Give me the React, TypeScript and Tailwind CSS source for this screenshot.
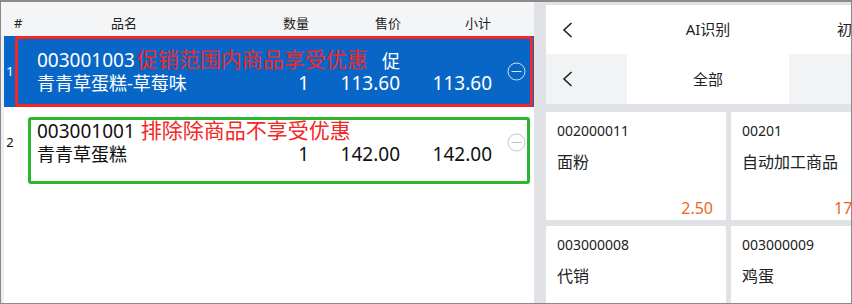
import React from "react";

const Chevron = () => (
  <svg width="11" height="16" viewBox="0 0 11 16" fill="none">
    <polyline points="9.5,1 2,8 9.5,15" stroke="#222" strokeWidth="1.6" />
  </svg>
);

const MinusCircle = ({ color }: { color: string }) => (
  <svg width="19" height="19" viewBox="0 0 19 19" fill="none">
    <circle cx="9.5" cy="9.5" r="8.5" stroke={color} strokeWidth="1" />
    <line x1="4.5" y1="9.5" x2="14.5" y2="9.5" stroke={color} strokeWidth="1" />
  </svg>
);

interface RowProps {
  index: number;
  code: string;
  note: string;
  name: string;
  qty: string;
  price: string;
  subtotal: string;
  promo?: boolean;
  selected?: boolean;
}

const CartRow = ({ index, code, note, name, qty, price, subtotal, promo, selected }: RowProps) => {
  const text = selected ? "text-white" : "text-[#111]";
  return (
    <div className={`flex h-[71px] ${selected ? "bg-[#0867c6]" : "bg-white"} ${text}`}>
      <div className="w-[12px] flex items-center justify-center text-[13px]">{index}</div>
      <div className="w-[21px]" />
      <div className="w-[220px] pt-[11px] whitespace-nowrap">
        <div className="h-[24px] leading-[24px] text-[19px]">
          {code}
          <span className={`text-[21px] text-[#f52626] ${selected ? "ml-[2px]" : "ml-[6px]"}`}>{note}</span>
        </div>
        <div className="h-[24px] leading-[24px] text-[18px]">{name}</div>
      </div>
      <div className="w-[52px] pt-[35px] text-right text-[19px] leading-[24px]">{qty}</div>
      <div className="w-[91px] pt-[11px] text-right text-[19px] leading-[24px]">
        <div className="h-[24px] pt-[2px] text-[18px]">{promo ? "促" : ""}</div>
        <div className="h-[24px]">{price}</div>
      </div>
      <div className="w-[92px] pt-[35px] text-right text-[19px] leading-[24px]">{subtotal}</div>
      <div className="w-[38px] pl-[15px] flex items-center">
        <MinusCircle color={selected ? "#d6e3f2" : "#c4c4c4"} />
      </div>
    </div>
  );
};

const ProductCard = ({
  code,
  name,
  price,
  priceClass = "pr-[13px]",
}: {
  code: string;
  name: string;
  price?: string;
  priceClass?: string;
}) => (
  <div className="bg-white w-[180px] h-[108px] shrink-0 pl-[11px] pt-[9px] flex flex-col">
    <div className="text-[14px] leading-[20px] text-[#222] whitespace-nowrap">{code}</div>
    <div className="mt-[9px] text-[16px] leading-[24px] text-[#222] whitespace-nowrap">{name}</div>
    {price && (
      <div className={`mt-[24px] text-right text-[16px] leading-[20px] text-[#f2641f] whitespace-nowrap ${priceClass}`}>
        {price}
      </div>
    )}
  </div>
);

export default function App() {
  return (
    <div className="w-[852px] h-[304px] border border-t-2 border-[#8a8a8a] bg-[#e1e2e6] flex overflow-hidden font-['Noto_Sans','Noto_Sans_CJK_SC',sans-serif] text-[#222]">
      {/* cart */}
      <div className="w-[533px] shrink-0 flex flex-col bg-[#eceef1] relative">
        <div className="h-[34px] bg-[#f4f5f7] flex pt-[12px] text-[13px] leading-[18px] text-[#222]">
          <div className="w-[36px] pl-[13px]">#</div>
          <div className="w-[174px] text-center">品名</div>
          <div className="w-[98px] text-right">数量</div>
          <div className="w-[92px] text-right">售价</div>
          <div className="w-[90px] text-right">小计</div>
        </div>
        <div className="ml-[3px] flex-1 bg-white flex flex-col">
          <CartRow
            index={1}
            code="003001003"
            note="促销范围内商品享受优惠"
            name="青青草蛋糕-草莓味"
            qty="1"
            price="113.60"
            subtotal="113.60"
            promo
            selected
          />
          <CartRow
            index={2}
            code="003001001"
            note="排除除商品不享受优惠"
            name="青青草蛋糕"
            qty="1"
            price="142.00"
            subtotal="142.00"
          />
        </div>
        {/* annotation boxes */}
        <div className="absolute left-[14px] top-[34px] w-[518px] h-[71px] border-[3px] border-[#f52626] rounded-[3px]" />
        <div className="absolute left-[27px] top-[115px] w-[502px] h-[67px] border-[3px] border-[#2db52d] rounded-[3px]" />
      </div>

      <div className="w-[12px] shrink-0" />

      {/* goods */}
      <div className="w-[305px] shrink-0 flex flex-col pt-[3px] overflow-hidden">
        <div className="h-[49px] bg-white flex items-center shrink-0">
          <div className="w-[81px] pl-[16px] flex items-center shrink-0">
            <Chevron />
          </div>
          <div className="w-[162px] text-center text-[15px] shrink-0">AI识别</div>
          <div className="pl-[48px] text-[15px] whitespace-nowrap">初始</div>
        </div>
        <div className="h-[50px] flex shrink-0">
          <div className="w-[81px] bg-[#f2f3f5] pl-[16px] flex items-center shrink-0">
            <Chevron />
          </div>
          <div className="w-[162px] bg-white flex items-center justify-center text-[15px] shrink-0">全部</div>
          <div className="flex-1 bg-[#f2f3f5]" />
        </div>
        <div className="mt-[8px] flex flex-col gap-[6px]">
          <div className="flex gap-[5px]">
            <ProductCard code="002000011" name="面粉" price="2.50" />
            <ProductCard code="00201" name="自动加工商品" price="17.00" priceClass="pr-[36px]" />
          </div>
          <div className="flex gap-[5px]">
            <ProductCard code="003000008" name="代销" />
            <ProductCard code="003000009" name="鸡蛋" />
          </div>
        </div>
      </div>
    </div>
  );
}
